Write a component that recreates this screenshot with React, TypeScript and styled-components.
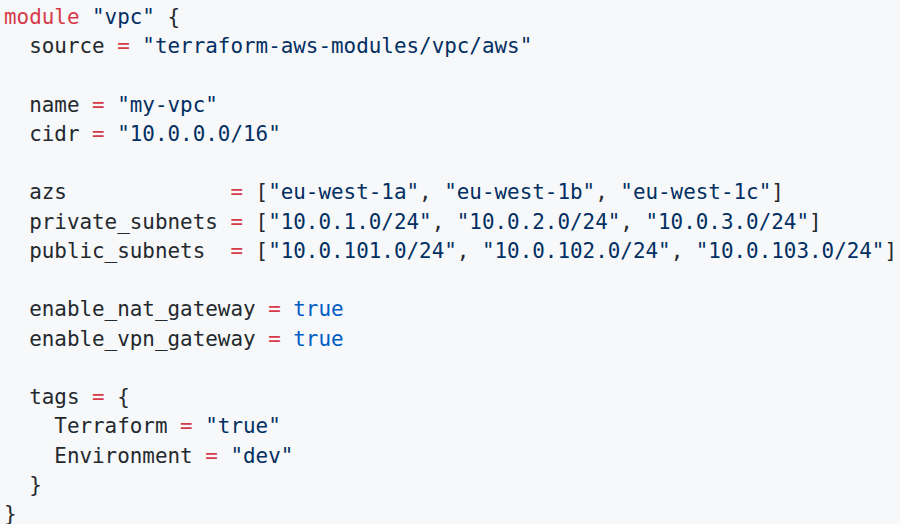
import React from "react";
import styled, { createGlobalStyle } from "styled-components";

const Global = createGlobalStyle`
  html, body { margin: 0; padding: 0; background: #f6f8fa; }
  body { width: 900px; height: 524px; overflow: hidden; }
`;

const Pre = styled.pre`
  margin: 0;
  padding: 3px 0 0 4px;
  font-family: "DejaVu Sans Mono", "Liberation Mono", monospace;
  font-size: 20.9px;
  line-height: 29.24px;
  color: #24292e;
  background: #f6f8fa;
  white-space: pre;
`;

const Line = styled.div`
  height: 29.24px;
`;

type Kind = "kw" | "str" | "op" | "const" | "txt";
const colors: Record<Kind, string> = {
  kw: "#d73a49",
  str: "#032f62",
  op: "#d73a49",
  const: "#005cc5",
  txt: "#24292e",
};

const Tok = styled.span<{ $k: Kind }>`
  color: ${(p) => colors[p.$k]};
`;

type T = [Kind, string];
const S = (s: string): T => ["str", s];
const X = (s: string): T => ["txt", s];
const E: T = ["op", "="];

const lines: T[][] = [
  [["kw", "module"], X(" "), S('"vpc"'), X(" {")],
  [X("  source "), E, X(" "), S('"terraform-aws-modules/vpc/aws"')],
  [],
  [X("  name "), E, X(" "), S('"my-vpc"')],
  [X("  cidr "), E, X(" "), S('"10.0.0.0/16"')],
  [],
  [X("  azs             "), E, X(" ["), S('"eu-west-1a"'), X(", "), S('"eu-west-1b"'), X(", "), S('"eu-west-1c"'), X("]")],
  [X("  private_subnets "), E, X(" ["), S('"10.0.1.0/24"'), X(", "), S('"10.0.2.0/24"'), X(", "), S('"10.0.3.0/24"'), X("]")],
  [X("  public_subnets  "), E, X(" ["), S('"10.0.101.0/24"'), X(", "), S('"10.0.102.0/24"'), X(", "), S('"10.0.103.0/24"'), X("]")],
  [],
  [X("  enable_nat_gateway "), E, X(" "), ["const", "true"]],
  [X("  enable_vpn_gateway "), E, X(" "), ["const", "true"]],
  [],
  [X("  tags "), E, X(" {")],
  [X("    Terraform "), E, X(" "), S('"true"')],
  [X("    Environment "), E, X(" "), S('"dev"')],
  [X("  }")],
  [X("}")],
];

export default function App() {
  return (
    <>
      <Global />
      <Pre>
        {lines.map((l, i) => (
          <Line key={i}>
            {l.map(([k, s], j) => (
              <Tok key={j} $k={k}>
                {s}
              </Tok>
            ))}
          </Line>
        ))}
      </Pre>
    </>
  );
}
